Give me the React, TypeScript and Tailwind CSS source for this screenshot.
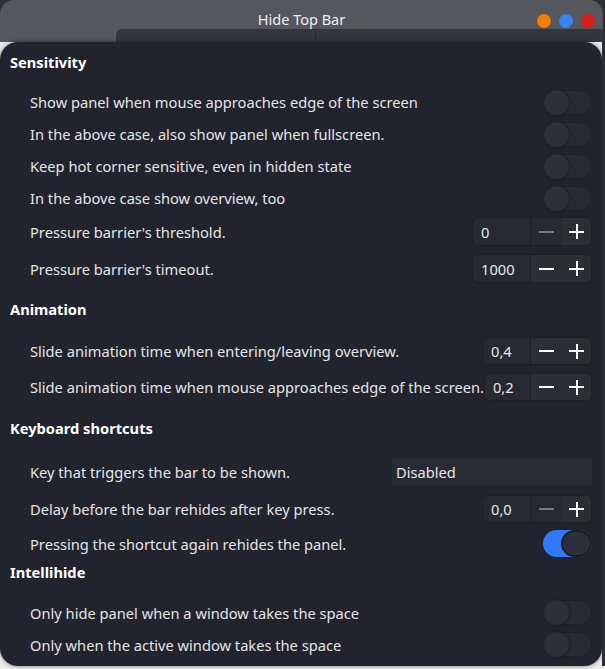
import React from "react";

const font = { fontFamily: '"Noto Sans", "Open Sans", sans-serif' };

function Switch({ on = false }: { on?: boolean }) {
  if (on) {
    return (
      <div className="relative h-[27px] w-[49px] rounded-full bg-[#2f78f6]">
        <div className="absolute right-0 top-0 h-[27px] w-[31px] rounded-full border-[2px] border-[#1a1c24] bg-[#2c2e39]" />
      </div>
    );
  }
  return (
    <div className="relative h-[25px] w-[48px] rounded-full border border-[#1e2027] bg-[#282a33]">
      <div className="absolute left-[-1px] top-[-1px] h-[25px] w-[25px] rounded-full bg-[#2d2f39] shadow-[1px_0_3px_rgba(0,0,0,0.35)]" />
    </div>
  );
}

function Stepper({
  value,
  entryW,
  minusDisabled = false,
}: {
  value: string;
  entryW: number;
  minusDisabled?: boolean;
}) {
  return (
    <div className="flex h-full overflow-hidden rounded-[6px] border border-[#1d1f26] bg-[#262832]">
      <div
        className="flex items-center pl-[8px] text-[14.67px] text-[#e6e6ea]"
        style={{ width: entryW }}
      >
        {value}
      </div>
      <div className="flex border-l border-[#1c1e25]">
        <div
          className={
            minusDisabled
              ? "flex w-[31px] items-center justify-center bg-[#262832]"
              : "flex w-[31px] items-center justify-center bg-[#2b2d37]"
          }
        >
          <div
            className={
              minusDisabled
                ? "h-[2px] w-[15px] bg-[#7a7b80]"
                : "h-[2px] w-[15px] bg-white"
            }
          />
        </div>
        <div className="relative flex w-[29px] items-center justify-center bg-[#2b2d37]">
          <div className="absolute h-[2px] w-[15px] bg-white" />
          <div className="absolute h-[15px] w-[2px] bg-white" />
        </div>
      </div>
    </div>
  );
}

function Row({
  label,
  children,
  className,
}: {
  label: string;
  children: React.ReactNode;
  className: string;
}) {
  return (
    <div className={"flex items-center justify-between pl-[30px] pr-[10px] " + className}>
      <span className="whitespace-nowrap text-[14.67px] text-[#e4e4e8]">{label}</span>
      {children}
    </div>
  );
}

function Header({ text, className }: { text: string; className: string }) {
  return (
    <div className={"flex items-center pl-[10px] text-[14.67px] font-bold text-white " + className}>
      {text}
    </div>
  );
}

export default function App() {
  return (
    <div className="h-[669px] w-[605px] overflow-hidden bg-[#ededee]" style={font}>
      <div className="bg-[#2c2e35]">
        <div className="mr-[2px] flex h-[42px] flex-col rounded-t-[14px] bg-[#55575e]">
          <div className="grid h-[29px] grid-cols-[1fr_auto_1fr]">
            <div />
            <div className="pt-[8px] text-[14.5px] leading-[22px] text-[#ececee]">Hide Top Bar</div>
            <div className="flex justify-end gap-[8px] pr-[8px] pt-[14px]">
              <div className="h-[14px] w-[14px] rounded-full bg-[#f57c00]" />
              <div className="h-[14px] w-[14px] rounded-full bg-[#3584f2]" />
              <div className="h-[14px] w-[14px] rounded-full bg-[#d81c1c]" />
            </div>
          </div>
          <div className="ml-[116px] flex h-[13px] rounded-tl-[6px] bg-[#34363f]">
            <div className="w-[200px] border-r border-[#282a31]" />
          </div>
        </div>
      </div>
      <div className="flex">
        <div className="h-[624px] w-[602px] rounded-b-[18px] rounded-t-[18px] bg-[#22242d] shadow-[0_0_4px_rgba(0,0,0,0.5)]">
          <Header text="Sensitivity" className="mt-[9px] h-[22px]" />
          <Row label="Show panel when mouse approaches edge of the screen" className="mt-[13px] h-[32px]">
            <Switch />
          </Row>
          <Row label="In the above case, also show panel when fullscreen." className="h-[32px]">
            <Switch />
          </Row>
          <Row label="Keep hot corner sensitive, even in hidden state" className="h-[32px]">
            <Switch />
          </Row>
          <Row label="In the above case show overview, too" className="h-[32px]">
            <Switch />
          </Row>
          <Row label="Pressure barrier's threshold." className="mt-[3px] h-[29px]">
            <Stepper value="0" entryW={57} minusDisabled />
          </Row>
          <Row label="Pressure barrier's timeout." className="mt-[8px] h-[29px]">
            <Stepper value="1000" entryW={57} />
          </Row>

          <Header text="Animation" className="mt-[15px] h-[22px]" />
          <Row label="Slide animation time when entering/leaving overview." className="mt-[17px] h-[28px]">
            <Stepper value="0,4" entryW={47} />
          </Row>
          <Row label="Slide animation time when mouse approaches edge of the screen." className="mt-[8px] h-[28px]">
            <Stepper value="0,2" entryW={47} />
          </Row>

          <Header text="Keyboard shortcuts" className="mt-[16px] h-[22px]" />
          <Row label="Key that triggers the bar to be shown." className="mt-[19px] h-[27px]">
            <div className="flex h-full w-[200px] items-center bg-[#282a34] pl-[4px] text-[14.67px] text-[#e6e6ea]">
              Disabled
            </div>
          </Row>
          <Row label="Delay before the bar rehides after key press." className="mt-[10px] h-[28px]">
            <Stepper value="0,0" entryW={47} minusDisabled />
          </Row>
          <Row label="Pressing the shortcut again rehides the panel." className="mt-[7px] h-[27px]">
            <Switch on />
          </Row>

          <Header text="Intellihide" className="mt-[4px] h-[22px]" />
          <Row label="Only hide panel when a window takes the space" className="mt-[17px] h-[25px]">
            <Switch />
          </Row>
          <Row label="Only when the active window takes the space" className="mt-[7px] h-[25px]">
            <Switch />
          </Row>
        </div>
        <div className="h-[624px] flex-1 bg-[#2a2c33]" />
      </div>
    </div>
  );
}
